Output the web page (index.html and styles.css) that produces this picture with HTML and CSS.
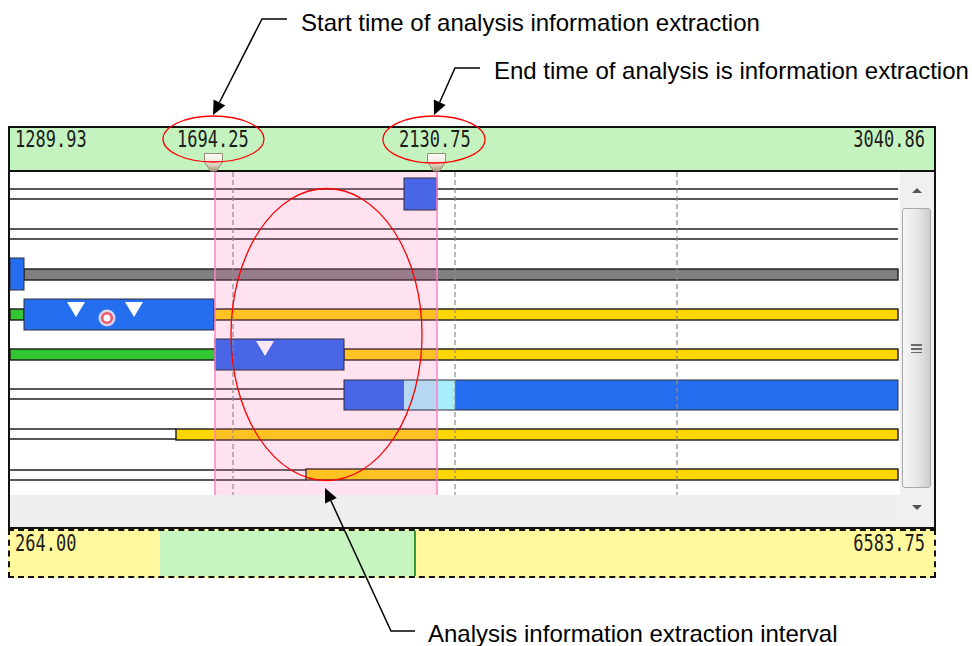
FILE: index.html
```html
<!DOCTYPE html>
<html lang="en">
<head>
    <meta charset="UTF-8">
    <meta name="viewport" content="width=device-width, initial-scale=1.0">
    <title>Analysis Information Extraction</title>
    <link rel="stylesheet" href="styles.css">
</head>
<body>

<div class="page">

    <div class="chart">
        <div class="chart-head">
            <span class="tick">1289.93</span>
            <span class="tick">3040.86</span>

            <span class="tick cursor-label" style="left: 167px">1694.25</span>
            <span class="tick cursor-label" style="left: 389px">2130.75</span>

            <svg class="handle" style="left: 194px" width="19" height="19" viewBox="0 0 19 19">
                <defs>
                    <linearGradient id="hg1" x1="0" y1="0" x2="0" y2="1">
                        <stop offset="0" stop-color="#ffffff"/>
                        <stop offset="0.5" stop-color="#ece6d8"/>
                        <stop offset="1" stop-color="#a89878"/>
                    </linearGradient>
                </defs>
                <path d="M0.5 0.5 H18.5 V9 L12.5 18 H6.5 L0.5 9 Z" fill="url(#hg1)" stroke="#9a8c72"/>
            </svg>
            <svg class="handle" style="left: 417px" width="19" height="19" viewBox="0 0 19 19">
                <path d="M0.5 0.5 H18.5 V9 L12.5 18 H6.5 L0.5 9 Z" fill="url(#hg1)" stroke="#9a8c72"/>
            </svg>
        </div>

        <div class="chart-body">
            <div class="plot">
                <svg class="rows" width="890" height="323" viewBox="0 0 890 323">
                    <!-- row 1 -->
                    <line class="wire" x1="0" y1="17" x2="888" y2="17"/>
                    <line class="wire" x1="0" y1="27" x2="888" y2="27"/>
                    <!-- row 2 -->
                    <line class="wire" x1="0" y1="57" x2="888" y2="57"/>
                    <line class="wire" x1="0" y1="67" x2="888" y2="67"/>
                    <!-- row 3 -->
                    <rect class="bar grey" x="14" y="97" width="874" height="11"/>
                    <!-- row 4 -->
                    <rect class="bar green" x="0" y="137" width="14" height="11"/>
                    <rect class="bar yellow" x="204" y="137" width="684" height="11"/>
                    <!-- row 5 -->
                    <rect class="bar green" x="0" y="177" width="205" height="11"/>
                    <rect class="bar yellow" x="334" y="177" width="554" height="11"/>
                    <!-- row 6 -->
                    <line class="wire" x1="0" y1="217" x2="334" y2="217"/>
                    <line class="wire" x1="0" y1="227" x2="334" y2="227"/>
                    <!-- row 7 -->
                    <line class="wire" x1="0" y1="257" x2="166" y2="257"/>
                    <line class="wire" x1="0" y1="267" x2="166" y2="267"/>
                    <rect class="bar yellow" x="166" y="257" width="722" height="11"/>
                    <!-- row 8 -->
                    <line class="wire" x1="0" y1="298" x2="296" y2="298"/>
                    <line class="wire" x1="0" y1="308" x2="296" y2="308"/>
                    <rect class="bar yellow" x="296" y="297" width="592" height="11"/>

                    <!-- extraction interval -->
                    <rect class="interval" x="205" y="0" width="222" height="323"/>

                    <!-- blocks -->
                    <rect class="block royal" x="394" y="6" width="33" height="32"/>
                    <rect class="block bright" x="0" y="86" width="14" height="32"/>
                    <rect class="block bright" x="14" y="127" width="190" height="31"/>
                    <rect class="block royal" x="205" y="167" width="129" height="31"/>
                    <rect x="334" y="208" width="60" height="30" fill="#4866e6"/>
                    <rect x="394" y="208" width="33" height="30" fill="#b6d8f2"/>
                    <rect x="427" y="208" width="18" height="30" fill="#a9ecfa"/>
                    <rect x="445" y="208" width="443" height="30" fill="#266ef0"/>
                    <rect class="block-frame" x="334" y="208" width="554" height="30"/>

                    <!-- events -->
                    <polygon class="event" points="57,130 75,130 66,145"/>
                    <polygon class="event" points="115,130 133,130 124,145"/>
                    <polygon class="event pinkish" points="246,169 264,169 255,184"/>
                    <circle cx="97" cy="146" r="8.5" fill="#f4e8f4" opacity="0.85"/>
                    <circle cx="97" cy="146" r="4.8" fill="#ffffff" stroke="#ec5a6a" stroke-width="2.6"/>

                    <!-- cursors and grid -->
                    <line class="edge" x1="205" y1="0" x2="205" y2="323"/>
                    <line class="edge" x1="427" y1="0" x2="427" y2="323"/>
                    <line class="grid" x1="223" y1="0" x2="223" y2="323"/>
                    <line class="grid" x1="445" y1="0" x2="445" y2="323"/>
                    <line class="grid" x1="667" y1="0" x2="667" y2="323"/>
                </svg>
                <div class="plot-foot"></div>
            </div>

            <div class="vscroll">
                <div class="sb-btn"><span class="arrow-up"></span></div>
                <div class="sb-thumb"><span class="grip"></span></div>
                <div class="sb-btn"><span class="arrow-down"></span></div>
            </div>
        </div>
    </div>

    <div class="overview">
        <div class="overview-window" style="left: 150px; width: 256px"></div>
        <span class="tick">264.00</span>
        <span class="tick">6583.75</span>
    </div>

    <!-- callouts -->
    <svg class="callouts" width="972" height="646" viewBox="0 0 972 646">
        <ellipse cx="213.5" cy="139" rx="50.5" ry="23"/>
        <ellipse cx="434" cy="139.5" rx="51" ry="23.5"/>
        <ellipse cx="326.5" cy="334.5" rx="95.5" ry="146"/>

        <polyline points="287,19 262,19 219.4,102.5"/>
        <polygon class="head" points="213,115 225.2,105.4 213.6,99.5"/>

        <polyline points="480,68 455,68 439.7,102.2"/>
        <polygon class="head" points="434,115 445.6,104.9 433.8,99.6"/>

        <polyline points="415,631 391,631 330.9,500.7"/>
        <polygon class="head" points="325,488 336.8,498 325,503.4"/>
    </svg>

    <p class="note note-start">Start time of analysis information extraction</p>
    <p class="note note-end">End time of analysis is information extraction</p>
    <p class="note note-interval">Analysis information extraction interval</p>

</div>

</body>
</html>
```

FILE: styles.css
```css
body {
    margin: 0;
    background: #ffffff;
    font-family: "Liberation Sans", Arial, sans-serif;
}

.page {
    position: relative;
    width: 972px;
    height: 646px;
    padding: 126px 0 0 8px;
    box-sizing: border-box;
    overflow: hidden;
}

/* tick labels */

.tick {
    display: block;
    font-family: "DejaVu Sans Mono", "Liberation Mono", monospace;
    font-size: 17px;
    line-height: 17px;
    color: #1c1c1c;
    transform: scaleY(1.35);
    transform-origin: 0 0;
    position: relative;
    z-index: 2;
}

/* chart frame */

.chart {
    width: 928px;
    border: 2px solid #111111;
    box-sizing: border-box;
}

.chart-head {
    position: relative;
    height: 42px;
    background-color: #c5f3c0;
    border-bottom: 2px solid #111111;
    display: flex;
    justify-content: space-between;
    align-items: flex-start;
    padding: 0 9px 0 5px;
}

.cursor-label {
    position: absolute;
    top: 0;
}

.handle {
    position: absolute;
    top: 25px;
    z-index: 3;
}

.chart-body {
    display: flex;
    height: 355px;
}

.plot {
    width: 890px;
    display: flex;
    flex-direction: column;
}

.rows {
    display: block;
    background: #ffffff;
}

.plot-foot {
    flex: 1;
    background-color: #efefef;
}

/* svg pieces */

.wire {
    stroke: #1e1e1e;
    stroke-width: 1.6;
}

.bar {
    stroke: #1a1a1a;
    stroke-width: 1.4;
}

.grey { fill: #808080; }
.green { fill: #33c633; }
.yellow { fill: #ffd700; }

.interval {
    fill: rgba(255, 110, 180, 0.2);
}

.block {
    stroke: #2e2e3a;
    stroke-width: 1;
}

.royal { fill: #4866e6; }
.bright { fill: #266ef0; }

.block-frame {
    fill: none;
    stroke: #2e2e3a;
    stroke-width: 1;
}

.event {
    fill: #ffffff;
}

.event.pinkish {
    fill: #fbe6f3;
}

.edge {
    stroke: #ff80c0;
    stroke-width: 1.5;
}

.grid {
    stroke: #8c8c8c;
    stroke-width: 1.2;
    stroke-dasharray: 5 3;
}

/* vertical scrollbar */

.vscroll {
    width: 34px;
    background-color: #f0f0f0;
    display: flex;
    flex-direction: column;
}

.sb-btn {
    height: 36px;
    display: flex;
    align-items: center;
    justify-content: center;
}

.sb-btn:last-child {
    flex: 1;
}

.arrow-up,
.arrow-down {
    width: 0;
    height: 0;
    border-left: 5px solid transparent;
    border-right: 5px solid transparent;
}

.arrow-up {
    border-bottom: 5px solid #555555;
}

.arrow-down {
    border-top: 5px solid #555555;
}

.sb-thumb {
    height: 280px;
    margin: 0 3px 0 2px;
    border: 1px solid #a9a9a9;
    border-radius: 3px;
    box-sizing: border-box;
    background: linear-gradient(to right, #f7f7f7, #e6e6e6 55%, #cdcdcd);
    display: flex;
    align-items: center;
    justify-content: center;
}

.grip {
    width: 11px;
    height: 9px;
    background: repeating-linear-gradient(to bottom, #6a6a6a 0, #6a6a6a 2px, transparent 2px, transparent 4px);
}

/* overview strip */

.overview {
    position: relative;
    width: 928px;
    height: 49px;
    border: 2px dashed #111111;
    box-sizing: border-box;
    background-color: #fff89c;
    display: flex;
    justify-content: space-between;
    align-items: flex-start;
    padding: 0 9px 0 5px;
}

.overview .tick {
    top: 1px;
}

.overview-window {
    position: absolute;
    top: 0;
    bottom: 0;
    background-color: #c6f5c0;
    border-right: 2px solid #3c9c34;
    box-sizing: border-box;
}

/* callouts */

.callouts {
    position: absolute;
    top: 0;
    left: 0;
    z-index: 5;
    pointer-events: none;
}

.callouts ellipse {
    fill: none;
    stroke: #ff0000;
    stroke-width: 1.3;
}

.callouts polyline {
    fill: none;
    stroke: #000000;
    stroke-width: 1.5;
}

.callouts .head {
    fill: #000000;
}

.note {
    position: absolute;
    margin: 0;
    font-size: 24px;
    line-height: 24px;
    color: #000000;
    white-space: nowrap;
    z-index: 6;
}

.note-start {
    left: 301px;
    top: 11px;
}

.note-end {
    left: 494px;
    top: 59px;
}

.note-interval {
    left: 428px;
    top: 622px;
}
```
